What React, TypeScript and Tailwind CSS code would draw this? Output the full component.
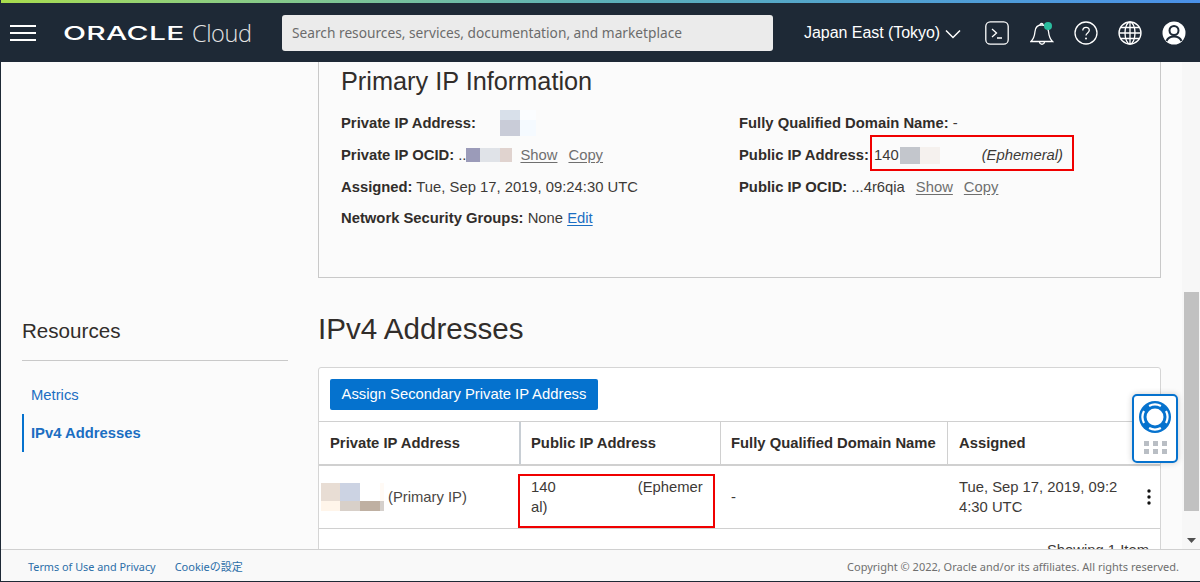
import React from "react";

const sans = "font-['Liberation_Sans',Arial,sans-serif]";

// blurred-out values in the screenshot
const Mosaic = ({ rows, cols, colors }: { rows: string; cols: string; colors: string[] }) => (
  <span
    className="inline-grid align-middle"
    style={{ gridTemplateRows: rows, gridTemplateColumns: cols }}
  >
    {colors.map((c, i) => (
      <span key={i} style={{ backgroundColor: c }} />
    ))}
  </span>
);

const Label = ({ children }: { children: React.ReactNode }) => (
  <span className="font-bold text-[#312d2a]">{children}</span>
);

const GrayLink = ({ children }: { children: React.ReactNode }) => (
  <span className="ml-[11px] text-[#6f6f6f] underline underline-offset-2">{children}</span>
);

const Header = () => (
  <header className="flex h-[59px] shrink-0 items-center bg-[#1e2936] text-white">
    <svg width="26" height="16" viewBox="0 0 26 16" className="ml-[9px]" fill="#fff">
      <rect x="0" y="0" width="26" height="2" />
      <rect x="0" y="7" width="26" height="2" />
      <rect x="0" y="14" width="26" height="2" />
    </svg>
    <div className="ml-[28px] mt-[2px] flex w-[188px] items-center">
      <span className="-ml-px w-[129px] origin-left scale-x-[1.58] font-['Inter',sans-serif] text-[19px] font-medium leading-none tracking-[0.2px]">
        ORACLE
      </span>
      <span className="font-['Open_Sans',sans-serif] text-[23.5px] font-light leading-none tracking-[-0.4px] text-[#e4e4e4]">
        Cloud
      </span>
    </div>
    <div className="ml-[30px] mt-px flex h-[36px] w-[491px] items-center rounded-[3px] bg-[#ebebeb] pl-[10px] font-['Noto_Sans',sans-serif] text-[13.73px] text-[#6b6b6b]">
      Search resources, services, documentation, and marketplace
    </div>
    <div className={`${sans} ml-[31px] flex items-center text-[16px] tracking-[-0.003em]`}>
      Japan East (Tokyo)
      <svg width="16" height="10" viewBox="0 0 16 10" className="ml-[5px] mt-[2px]" fill="none" stroke="#fff" strokeWidth="1.5">
        <path d="M1 1.500 8 8.500 15 1.500" />
      </svg>
    </div>
    <div className="ml-[24px] flex items-center">
      <svg width="24" height="24" viewBox="0 0 24 24" fill="none" stroke="#fff" strokeWidth="1.3">
        <rect x="0.800" y="0.800" width="22.400" height="22.400" rx="4.500" />
        <path d="M7 8l4.500 4L7 16M12 17h5" />
      </svg>
      <svg width="24" height="26" viewBox="0 0 24 26" className="ml-[21px]" fill="none" stroke="#fff" strokeWidth="1.3">
        <path d="M1 21.500c3-3 3.500-5 4-10 .4-4 3-6.500 6.500-6.500S18 7.500 18.500 11.500c.5 5 1 7 4 10z" />
        <path d="M10 5c0-2 3-2 3 0M9.500 22c.5 3 4.500 3 5 0" />
        <circle cx="18" cy="6" r="4" fill="#2bbd9f" stroke="none" />
      </svg>
      <svg width="24" height="24" viewBox="0 0 24 24" className="ml-[20px]" fill="none" stroke="#fff" strokeWidth="1.3">
        <circle cx="12" cy="12" r="11" />
        <path d="M8.800 9.500c0-4.200 6.500-4.200 6.500-.2 0 2.700-3.300 2.500-3.300 5.200" />
        <circle cx="12" cy="17.500" r="1" fill="#fff" stroke="none" />
      </svg>
      <svg width="24" height="24" viewBox="0 0 24 24" className="ml-[20px]" fill="none" stroke="#fff" strokeWidth="1.3">
        <circle cx="12" cy="12" r="11" />
        <ellipse cx="12" cy="12" rx="5" ry="11" />
        <path d="M12 1v22M1 12h22M2.700 6.500h18.600M2.700 17.500h18.600" />
      </svg>
      <svg width="24" height="24" viewBox="0 0 24 24" className="ml-[20px]">
        <circle cx="12" cy="12" r="11.500" fill="#fff" />
        <circle cx="12" cy="9.500" r="4.500" fill="none" stroke="#1e2936" strokeWidth="2" />
        <path d="M4.500 20c1.500-3.500 4-4.500 7.500-4.500s6 1 7.500 4.500" fill="none" stroke="#1e2936" strokeWidth="2" />
      </svg>
    </div>
  </header>
);

const Sidebar = () => (
  <aside className={`${sans} w-[317px] shrink-0 pl-[21px] pt-[257px]`}>
    <h2 className="text-[20.6px] leading-[24px] text-[#312d2a]">Resources</h2>
    <div className="mt-[17px] w-[266px] border-t border-[#c9c9c9]" />
    <nav className="mt-[24px] text-[14.8px] text-[#1b6ec2]">
      <div className="pl-[9px] leading-[20px]">Metrics</div>
      <div className="mt-[9px] border-l-2 border-[#0572ce] pl-[7px] font-bold leading-[38px]">IPv4 Addresses</div>
    </nav>
  </aside>
);

const PrimaryIpCard = () => (
  <section className="h-[216px] w-[843px] shrink-0 border-x border-b border-[#c9c9c9] pl-[22px] pt-[4px] text-[14.8px] text-[#3d3a37]">
    <h2 className="text-[25.3px] leading-[30px] text-[#312d2a]">Primary IP Information</h2>
    <div className="mt-[11px] grid grid-cols-[398px_1fr] grid-rows-[32px_32px_32px_31px] items-center">
      <div className="relative">
        <Label>Private IP Address:</Label>
        <span className="absolute left-[159px] top-[-2px]">
          <Mosaic rows="10px 16px" cols="20px 16px" colors={["#d8e0ea", "#fbfdff", "#c9ccd8", "#f5faff"]} />
        </span>
      </div>
      <div>
        <Label>Fully Qualified Domain Name:</Label> -
      </div>
      <div className="flex items-center">
        <Label>Private IP OCID:</Label>
        <span className="ml-[4px]">..</span>
        <Mosaic rows="14px" cols="14px 20px 12px" colors={["#9b9bb9", "#e0e3e8", "#e0d3cf"]} />
        <span className="-ml-[3px]">
          <GrayLink>Show</GrayLink>
        </span>
        <GrayLink>Copy</GrayLink>
      </div>
      <div className="flex items-center">
        <Label>Public IP Address:</Label>
        <span className="ml-[5px] mr-px">140</span>
        <Mosaic rows="17px" cols="20px 20px" colors={["#c3c6cc", "#f5f1ee"]} />
        <span className="ml-[42px] italic">(Ephemeral)</span>
      </div>
      <div>
        <Label>Assigned:</Label> Tue, Sep 17, 2019, 09:24:30 UTC
      </div>
      <div>
        <Label>Public IP OCID:</Label> ...4r6qia
        <GrayLink>Show</GrayLink>
        <GrayLink>Copy</GrayLink>
      </div>
      <div>
        <Label>Network Security Groups:</Label> None <span className="text-[#1b6ec2] underline underline-offset-2">Edit</span>
      </div>
    </div>
  </section>
);

const AddressTable = () => (
  <section className="w-[843px] shrink-0 rounded-t-[3px] border border-[#d5d5d5] bg-white pt-[11px] text-[14.8px] text-[#3d3a37]">
    <button className="ml-[11px] h-[31px] w-[268px] rounded-[2px] bg-[#0572ce] text-[14.8px] text-white">
      Assign Secondary Private IP Address
    </button>
    <div className="mt-[11px] grid grid-cols-[202px_200px_227px_190px_1fr] border-y border-[#d0d0d0] border-b-2 font-bold text-[#312d2a]">
      <div className="flex h-[42px] items-center border-r-2 border-[#c8ced4] pl-[11px]">Private IP Address</div>
      <div className="flex items-center border-r border-[#d0d0d0] pl-[10px]">Public IP Address</div>
      <div className="flex items-center border-r border-[#d0d0d0] pl-[10px]">Fully Qualified Domain Name</div>
      <div className="flex items-center pl-[11px]">Assigned</div>
      <div />
    </div>
    <div className="grid h-[63px] grid-cols-[202px_200px_227px_190px_1fr] items-center border-b border-[#d0d0d0]">
      <div className="flex items-center pl-[2px] text-[#4a4744]">
        <Mosaic
          rows="18px 10px"
          cols="19px 20px 20px 4px"
          colors={["#e8ddd4", "#ccd3e3", "#ffffff", "#fffaf5", "#fff5ea", "#d8d0c9", "#bfb0a2", "#d5d0cc"]}
        />
        <span className="ml-[4px]">(Primary IP)</span>
      </div>
      <div className="break-all pl-[10px] pr-[14px] leading-[20px]">
        140<span className="inline-block w-[82px]" />(Ephemeral)
      </div>
      <div className="pl-[10px]">-</div>
      <div className="break-all pl-[11px] pr-[10px] leading-[20px]">Tue, Sep 17, 2019, 09:24:30 UTC</div>
      <div className="flex justify-end pr-[9px]">
        <svg width="4" height="16" viewBox="0 0 4 16" fill="#111">
          <circle cx="2" cy="2" r="1.700" />
          <circle cx="2" cy="8" r="1.700" />
          <circle cx="2" cy="14" r="1.700" />
        </svg>
      </div>
    </div>
    <div className="pr-[11px] pt-[12px] text-right leading-[18px]">Showing 1 Item</div>
  </section>
);

const Scrollbar = () => (
  <div className="flex w-[18px] shrink-0 flex-col items-center bg-[#f7f7f7] pl-px">
    <div className="mt-[230px] h-[219px] w-[15px] bg-[#c1c1c1]" />
    <svg width="9" height="5" viewBox="0 0 9 5" className="mt-[27px]" fill="#505050">
      <path d="M0 0h9L4.500 5z" />
    </svg>
  </div>
);

const HelpWidget = () => (
  <div className="absolute left-[1131px] top-[394px] flex h-[69px] w-[46px] flex-col items-center rounded-[5px] border-2 border-[#0572ce] bg-white pt-[5px] shadow-[0_0_6px_rgba(0,0,0,0.2)]">
    <svg width="32" height="32" viewBox="0 0 32 32" fill="none">
      <circle cx="16" cy="16" r="16" fill="#0572ce" />
      <circle cx="16" cy="16" r="8.500" fill="#fff" />
      <path
        d="M10.100 5A12.500 12.500 0 0 1 21.900 5M27 10.100A12.500 12.500 0 0 1 27 21.900M21.900 27A12.500 12.500 0 0 1 10.100 27M5 21.900A12.500 12.500 0 0 1 5 10.100"
        stroke="#fff"
        strokeWidth="2.200"
      />
    </svg>
    <div className="mt-[8px] grid grid-cols-3 gap-x-[4px] gap-y-[3px]">
      {[0, 1, 2, 3, 4, 5].map((i) => (
        <span key={i} className="h-[5px] w-[5px] bg-[#b9bec4]" />
      ))}
    </div>
  </div>
);

const Footer = () => (
  <footer className="flex h-[32px] shrink-0 items-center border-t border-[#d0d0d0] bg-[#f9f9f9] pl-[27px] pr-[21px] pt-[3px] font-['Noto_Sans','Noto_Sans_CJK_JP',sans-serif] text-[11px]">
    <span className="text-[10.85px] text-[#2b6ea8]">Terms of Use and Privacy</span>
    <span className="ml-[19px] text-[#2b6ea8]">Cookieの設定</span>
    <span className="ml-auto text-[#6f6f6f]">Copyright © 2022, Oracle and/or its affiliates. All rights reserved.</span>
  </footer>
);

export default function App() {
  return (
    <div className="relative flex h-[582px] w-[1200px] flex-col overflow-hidden border-b border-l border-[#1e2936] bg-[#fbfbfb]">
      <div className="h-[3px] shrink-0 bg-gradient-to-r from-[#a8dc4c] via-[#5cb0b8] to-[#4a90e8]" />
      <Header />
      <main className={`${sans} flex min-h-0 flex-1 overflow-hidden`}>
        <Sidebar />
        <div className="flex min-w-0 flex-1 flex-col">
          <PrimaryIpCard />
          <h1 className="pt-[34px] text-[29.6px] leading-[34px] text-[#312d2a]">IPv4 Addresses</h1>
          <div className="mt-[21px]">
            <AddressTable />
          </div>
        </div>
        <Scrollbar />
      </main>
      <Footer />
      <HelpWidget />
      {/* red highlight boxes added on top of the screenshot */}
      <div className="pointer-events-none absolute left-[869px] top-[135px] h-[36px] w-[204px] border-2 border-[#f00000]" />
      <div className="pointer-events-none absolute left-[517px] top-[474px] h-[54px] w-[197px] border-2 border-[#f00000]" />
    </div>
  );
}
